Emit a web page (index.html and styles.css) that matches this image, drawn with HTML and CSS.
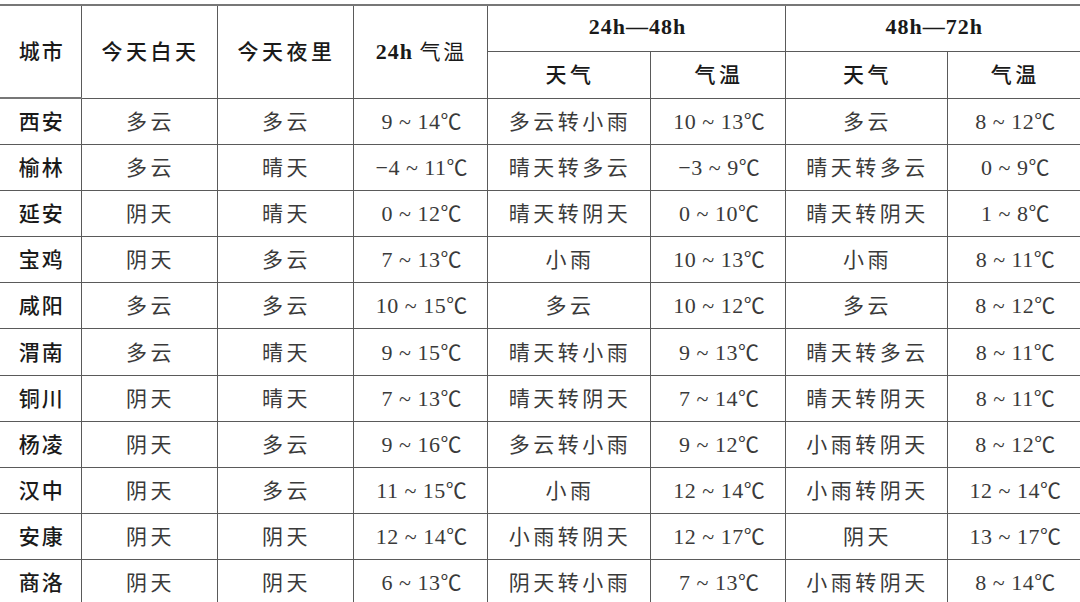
FILE: index.html
```html
<!DOCTYPE html>
<html lang="zh-CN">
<head>
<meta charset="utf-8">
<link rel="stylesheet" href="styles.css">
</head>
<body>
<div class="wrap">
<table class="wx">
  <colgroup>
    <col class="c1"><col class="c2"><col class="c3"><col class="c4"><col class="c5"><col class="c6"><col class="c7"><col class="c8">
  </colgroup>
  <thead>
    <tr class="h1">
      <th rowspan="2" class="city">城市</th>
      <th rowspan="2">今天白天</th>
      <th rowspan="2">今天夜里</th>
      <th rowspan="2" class="num">24h <span class="cj">气温</span></th>
      <th colspan="2" class="num">24h—48h</th>
      <th colspan="2" class="num">48h—72h</th>
    </tr>
    <tr class="h2">
      <th>天气</th><th>气温</th><th>天气</th><th>气温</th>
    </tr>
  </thead>
  <tbody>
    <tr><th class="city">西安</th><td>多云</td><td>多云</td><td class="num">9 ~ 14<span class="deg">℃</span></td><td>多云转小雨</td><td class="num">10 ~ 13<span class="deg">℃</span></td><td>多云</td><td class="num">8 ~ 12<span class="deg">℃</span></td></tr>
    <tr><th class="city">榆林</th><td>多云</td><td>晴天</td><td class="num">−4 ~ 11<span class="deg">℃</span></td><td>晴天转多云</td><td class="num">−3 ~ 9<span class="deg">℃</span></td><td>晴天转多云</td><td class="num">0 ~ 9<span class="deg">℃</span></td></tr>
    <tr><th class="city">延安</th><td>阴天</td><td>晴天</td><td class="num">0 ~ 12<span class="deg">℃</span></td><td>晴天转阴天</td><td class="num">0 ~ 10<span class="deg">℃</span></td><td>晴天转阴天</td><td class="num">1 ~ 8<span class="deg">℃</span></td></tr>
    <tr><th class="city">宝鸡</th><td>阴天</td><td>多云</td><td class="num">7 ~ 13<span class="deg">℃</span></td><td>小雨</td><td class="num">10 ~ 13<span class="deg">℃</span></td><td>小雨</td><td class="num">8 ~ 11<span class="deg">℃</span></td></tr>
    <tr><th class="city">咸阳</th><td>多云</td><td>多云</td><td class="num">10 ~ 15<span class="deg">℃</span></td><td>多云</td><td class="num">10 ~ 12<span class="deg">℃</span></td><td>多云</td><td class="num">8 ~ 12<span class="deg">℃</span></td></tr>
    <tr><th class="city">渭南</th><td>多云</td><td>晴天</td><td class="num">9 ~ 15<span class="deg">℃</span></td><td>晴天转小雨</td><td class="num">9 ~ 13<span class="deg">℃</span></td><td>晴天转多云</td><td class="num">8 ~ 11<span class="deg">℃</span></td></tr>
    <tr><th class="city">铜川</th><td>阴天</td><td>晴天</td><td class="num">7 ~ 13<span class="deg">℃</span></td><td>晴天转阴天</td><td class="num">7 ~ 14<span class="deg">℃</span></td><td>晴天转阴天</td><td class="num">8 ~ 11<span class="deg">℃</span></td></tr>
    <tr><th class="city">杨凌</th><td>阴天</td><td>多云</td><td class="num">9 ~ 16<span class="deg">℃</span></td><td>多云转小雨</td><td class="num">9 ~ 12<span class="deg">℃</span></td><td>小雨转阴天</td><td class="num">8 ~ 12<span class="deg">℃</span></td></tr>
    <tr><th class="city">汉中</th><td>阴天</td><td>多云</td><td class="num">11 ~ 15<span class="deg">℃</span></td><td>小雨</td><td class="num">12 ~ 14<span class="deg">℃</span></td><td>小雨转阴天</td><td class="num">12 ~ 14<span class="deg">℃</span></td></tr>
    <tr><th class="city">安康</th><td>阴天</td><td>阴天</td><td class="num">12 ~ 14<span class="deg">℃</span></td><td>小雨转阴天</td><td class="num">12 ~ 17<span class="deg">℃</span></td><td>阴天</td><td class="num">13 ~ 17<span class="deg">℃</span></td></tr>
    <tr><th class="city">商洛</th><td>阴天</td><td>阴天</td><td class="num">6 ~ 13<span class="deg">℃</span></td><td>阴天转小雨</td><td class="num">7 ~ 13<span class="deg">℃</span></td><td>小雨转阴天</td><td class="num">8 ~ 14<span class="deg">℃</span></td></tr>
  </tbody>
</table>
</div>
</body>
</html>
```

FILE: styles.css
```css
html, body {
  margin: 0;
  padding: 0;
  background: #ffffff;
  overflow: hidden;
}
.wrap {
  width: 1080px;
  height: 602px;
  overflow: hidden;
  padding-top: 4px;
  box-sizing: border-box;
}
.wx {
  border-collapse: collapse;
  table-layout: fixed;
  width: 1080px;
  font-family: "Liberation Serif", "Noto Sans CJK SC", serif;
  color: #3a3a3a;
}
.c1 { width: 81px; }
.c2 { width: 136px; }
.c3 { width: 136px; }
.c4 { width: 134px; }
.c5 { width: 163px; }
.c6 { width: 135px; }
.c7 { width: 162px; }
.c8 { width: 133px; }
.wx th, .wx td {
  border: 1.5px solid #5a5a5a;
  padding: 0 0 3px 3px;
  text-align: center;
  vertical-align: middle;
  font-size: 21px;
  letter-spacing: 3.5px;
  white-space: nowrap;
  font-weight: normal;
  font-family: "Noto Sans CJK SC", sans-serif;
}
.wx tr:first-child th { border-top: 2px solid #777; }
.wx tr > :first-child { border-left: none; }
.wx tr > :last-child { border-right: none; }
.wx thead th {
  color: #1a1a1a;
  font-weight: 500;
}
.wx th.city {
  color: #1a1a1a;
  font-weight: 500;
  letter-spacing: 2px;
}
.wx .num {
  font-family: "Liberation Serif", "Noto Sans CJK SC", serif;
  font-size: 22px;
  letter-spacing: 0.5px;
}
.wx .num .deg {
  font-family: "Noto Sans CJK SC", sans-serif;
  font-size: 21px;
  letter-spacing: 0;
}
.wx thead .num {
  font-weight: bold;
  letter-spacing: 1px;
}
.wx thead .num .cj {
  font-family: "Noto Sans CJK SC", sans-serif;
  font-weight: normal;
  font-size: 21px;
  letter-spacing: 3px;
}
.h1 { height: 46px; }
.h2 { height: 47px; }
tbody tr { height: 46.2px; }
```
